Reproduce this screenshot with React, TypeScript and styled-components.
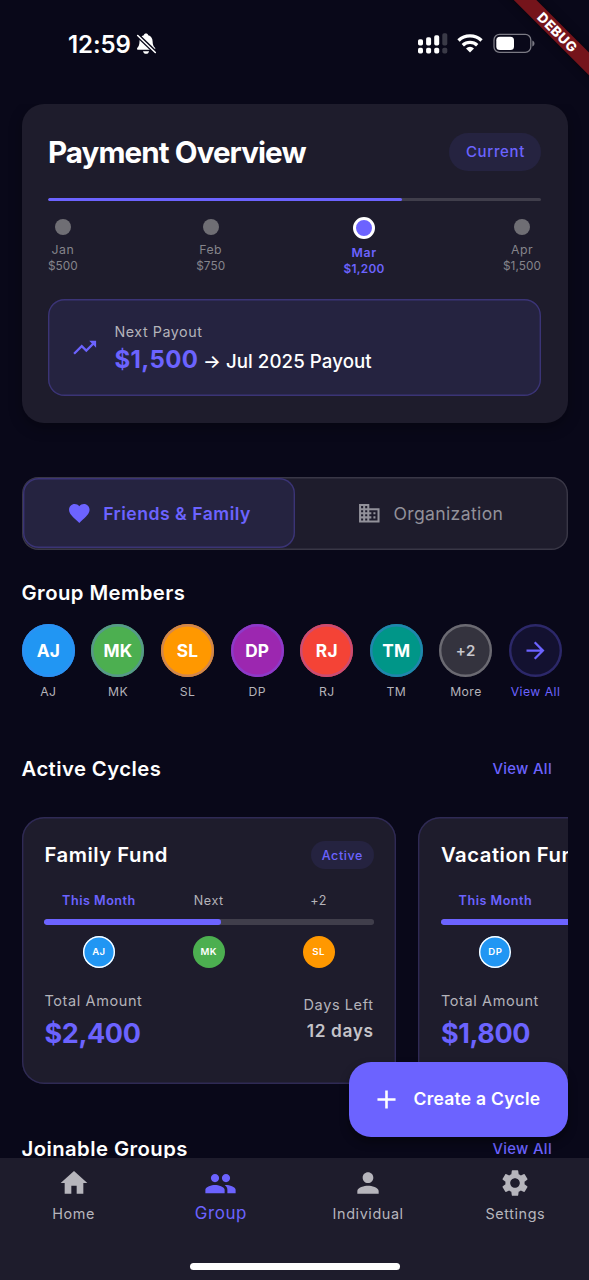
import React from "react";
import styled, { createGlobalStyle, css } from "styled-components";
import {
  MdAdd,
  MdArrowForward,
  MdBusiness,
  MdFavorite,
  MdHome,
  MdPeople,
  MdPerson,
  MdSettings,
  MdTrendingUp,
} from "react-icons/md";

const c = {
  bg: "#090819",
  surface: "#1e1c2c",
  accent: "#6c63ff",
  tint: "#252340",
  text: "#ffffff",
  soft: "#b4b3ba",
};

const GlobalStyle = createGlobalStyle`
  * { box-sizing: border-box; }
  body { margin: 0; background: ${c.bg}; font-family: Inter, "Liberation Sans", sans-serif; }
  svg { display: block; flex: none; }
`;

const type = (size: number, line: number, weight: number, spacing: number) => css`
  font-size: ${size}px;
  line-height: ${line}px;
  font-weight: ${weight};
  letter-spacing: ${spacing}px;
  white-space: nowrap;
`;

const Screen = styled.div`
  position: relative;
  width: 589px;
  height: 1280px;
  overflow: hidden;
  display: flex;
  flex-direction: column;
  background: ${c.bg};
  color: ${c.text};
`;

const StatusBar = styled.header`
  height: 104px;
  flex: none;
  display: flex;
  justify-content: space-between;
  align-items: flex-start;
  padding: 32px 54px 0 68px;
`;
const Clock = styled.div`
  display: flex;
  gap: 5px;
  padding-top: 1px;
  ${type(24, 24, 600, -0.1)}
`;

const Content = styled.main`
  flex: 1;
  min-height: 0;
  overflow: hidden;
  padding: 0 21.5px;
`;

const Overview = styled.section`
  height: 319px;
  padding: 28.5px 26.5px 0;
  border-radius: 22px;
  background: ${c.surface};
  box-shadow: 0 5px 14px rgba(0, 0, 0, 0.3);
`;
const OverviewHead = styled.div`
  display: flex;
  justify-content: space-between;
  align-items: center;
  height: 38px;
`;
const Title = styled.h1`
  margin: 0;
  ${type(29.6, 36, 700, -0.93)}
`;
const Badge = styled.span<{ $small?: boolean }>`
  display: flex;
  align-items: center;
  background: ${c.tint};
  color: ${c.accent};
  border-radius: 27px;
  ${(p) =>
    p.$small
      ? css`
          height: 28px;
          padding: 1px 10.5px 0 11px;
          ${type(12.5, 28, 500, 0.6)}
        `
      : css`
          height: 38px;
          padding: 0 16px 0 16.5px;
          ${type(15, 38, 500, 0.65)}
        `}
`;
const Track = styled.div<{ $h: number }>`
  height: ${(p) => p.$h}px;
  border-radius: ${(p) => p.$h / 2}px;
  background: #403e4b;
  overflow: hidden;
`;
const Fill = styled.div<{ $w: number }>`
  height: 100%;
  width: ${(p) => p.$w}px;
  border-radius: inherit;
  background: ${c.accent};
`;
const OverviewTrack = styled(Track)`
  margin-top: 27.5px;
`;
const Months = styled.div`
  display: flex;
  justify-content: space-between;
  align-items: center;
  height: 60px;
  margin-top: 15.5px;
`;
const Month = styled.div<{ $on?: boolean }>`
  display: flex;
  flex-direction: column;
  align-items: center;
  color: ${(p) => (p.$on ? c.accent : "#85848b")};
  ${(p) => type(12.3, 16, p.$on ? 600 : 400, p.$on ? 0.7 : 0.5)}
`;
const Sum = styled.span<{ $on?: boolean }>`
  ${(p) => type(11.8, 16, p.$on ? 600 : 400, p.$on ? 0.3 : 0.05)}
`;
const Dot = styled.i<{ $on?: boolean }>`
  width: ${(p) => (p.$on ? 22 : 16)}px;
  height: ${(p) => (p.$on ? 22 : 16)}px;
  margin-bottom: ${(p) => (p.$on ? 6 : 7)}px;
  border-radius: 50%;
  background: ${(p) => (p.$on ? c.accent : "#6f6e74")};
  border: ${(p) => (p.$on ? "3px solid #fff" : "0")};
`;
const Payout = styled.div`
  display: flex;
  align-items: center;
  gap: 16px;
  height: 97.5px;
  margin-top: 22px;
  padding: 0 23px;
  box-shadow: inset 0 0 0 1.4px #3b3476;
  border-radius: 16.5px;
  background: ${c.tint};
  color: ${c.accent};
`;
const PayoutText = styled.div`
  padding-top: 6px;
`;
const PayoutLabel = styled.div`
  color: ${c.soft};
  ${type(14.3, 20, 400, 0.55)}
`;
const PayoutLine = styled.div`
  display: flex;
  align-items: baseline;
  gap: 4.5px;
  margin-top: 2px;
`;
const PayoutAmount = styled.span`
  ${type(24, 32, 700, 0.4)}
`;
const PayoutNote = styled.span`
  color: ${c.text};
  ${type(18.7, 32, 500, 0.07)}
`;

const Switcher = styled.div`
  display: flex;
  height: 73px;
  margin-top: 53.5px;
  padding: 1.4px;
  box-shadow: inset 0 0 0 1.4px #393746;
  border-radius: 16.5px;
  background: ${c.surface};
`;
const SwitchTab = styled.button<{ $on?: boolean }>`
  flex: 1;
  display: flex;
  align-items: center;
  justify-content: center;
  gap: ${(p) => (p.$on ? 12 : 11.5)}px;
  padding: 1px 0 0;
  font-family: inherit;
  border: 0;
  background: ${(p) => (p.$on ? c.tint : "transparent")};
  box-shadow: ${(p) => (p.$on ? "inset 0 0 0 1.4px #3b3476" : "none")};
  border-radius: 15.5px;
  color: ${(p) => (p.$on ? c.accent : "#92919a")};
  ${(p) => type(17.6, 24, p.$on ? 600 : 400, p.$on ? 0.5 : 0.35)}
`;

const SectionTitle = styled.h2`
  margin: 0;
  ${type(20.3, 28, 600, 0.43)}
`;
const MembersTitle = styled(SectionTitle)`
  margin-top: 29px;
`;
const Members = styled.div`
  display: flex;
  gap: 16.6px;
  margin-top: 17px;
  padding-left: 0.4px;
`;
const Member = styled.div<{ $accent?: boolean }>`
  width: 53px;
  display: flex;
  flex-direction: column;
  align-items: center;
  gap: 6.5px;
  color: ${(p) => (p.$accent ? c.accent : c.soft)};
  ${type(12.2, 18, 400, 0.45)}
`;
const Avatar = styled.div<{ $bg: string; $ring: string; $more?: boolean }>`
  width: 53px;
  height: 53px;
  flex: none;
  display: flex;
  align-items: center;
  justify-content: center;
  padding-top: 1px;
  border-radius: 50%;
  box-shadow: inset 0 0 0 2.4px ${(p) => p.$ring};
  background: ${(p) => p.$bg};
  color: ${(p) => (p.$more ? "#c8c7cc" : "#fff")};
  ${(p) => type(p.$more ? 15 : 17.3, 22, p.$more ? 600 : 700, p.$more ? 0.6 : 0.2)}
`;

const SectionHead = styled.div`
  display: flex;
  justify-content: space-between;
  align-items: center;
  padding-right: 15.5px;
`;
const CyclesHead = styled(SectionHead)`
  margin-top: 53.5px;
`;
const JoinHead = styled(SectionHead)`
  margin-top: 51px;
`;
const Link = styled.a`
  color: ${c.accent};
  ${type(14.8, 28, 500, 0.35)}
`;
const Cycles = styled.div`
  display: flex;
  gap: 22px;
  margin: 34px 0 0;
  overflow: hidden;
`;
const Card = styled.article`
  width: 374.5px;
  height: 267.5px;
  flex: none;
  padding: 23px 22.5px 0;
  box-shadow: inset 0 0 0 1.4px #2f2a55;
  border-radius: 22px;
  background: ${c.surface};
`;
const CardHead = styled.div`
  display: flex;
  justify-content: space-between;
  align-items: center;
  height: 31px;
`;
const CardTitle = styled.h3`
  margin: 0;
  padding-left: 0.5px;
  ${type(20.3, 28, 600, 0.5)}
`;
const Thirds = styled.div`
  display: grid;
  grid-template-columns: repeat(3, 1fr);
  justify-items: center;
`;
const Stages = styled(Thirds)`
  margin: 21px 0 9.5px;
`;
const Stage = styled.span<{ $on?: boolean }>`
  color: ${(p) => (p.$on ? c.accent : c.soft)};
  ${(p) => type(12.6, 18, p.$on ? 600 : 400, 0.5)}
`;
const Faces = styled(Thirds)`
  margin-top: 11px;
`;
const Face = styled.div<{ $bg: string; $on?: boolean }>`
  width: 32px;
  height: 32px;
  display: flex;
  align-items: center;
  justify-content: center;
  border-radius: 50%;
  box-shadow: ${(p) => (p.$on ? "inset 0 0 0 1.4px #fff" : "none")};
  background: ${(p) => p.$bg};
  ${type(9.6, 12, 600, 0.5)}
`;
const CardFoot = styled.div`
  display: flex;
  justify-content: space-between;
  align-items: center;
  margin-top: 22px;
`;
const Stat = styled.div<{ $right?: boolean }>`
  text-align: ${(p) => (p.$right ? "right" : "left")};
  padding-left: 0.5px;
  padding-top: ${(p) => (p.$right ? 0 : 1)}px;
`;
const StatLabel = styled.div`
  color: ${c.soft};
  ${type(14.5, 20, 400, 0.6)}
`;
const Total = styled.div`
  margin-top: 4px;
  color: ${c.accent};
  ${type(27, 37, 700, -0.4)}
`;
const Days = styled.div`
  margin-top: 4px;
  padding-bottom: 3px;
  color: #c4c3c9;
  ${type(17.3, 24, 600, 0.6)}
`;

const CreateButton = styled.button`
  position: absolute;
  right: 21.5px;
  top: 1062px;
  width: 218.5px;
  height: 74.5px;
  display: flex;
  align-items: center;
  gap: 11.5px;
  padding: 0 0 0 22px;
  border: 0;
  border-radius: 22px;
  background: ${c.accent};
  color: #fff;
  font-family: inherit;
  box-shadow: 0 5px 10px rgba(0, 0, 0, 0.4);
  ${type(17.5, 24, 600, 0.25)}
`;

const Nav = styled.nav`
  position: relative;
  flex: none;
  height: 122px;
  display: grid;
  grid-template-columns: repeat(4, 1fr);
  background: ${c.surface};
`;
const NavItem = styled.div<{ $on?: boolean }>`
  display: flex;
  flex-direction: column;
  align-items: center;
  padding-top: 9px;
  gap: ${(p) => (p.$on ? 1 : 3)}px;
  color: ${(p) => (p.$on ? c.accent : "#b6b5bc")};
  ${(p) => (p.$on ? type(16.9, 24, 400, 0.65) : type(14.4, 23, 400, 0.6))}
`;
const HomeIndicator = styled.div`
  position: absolute;
  left: 190px;
  bottom: 10.5px;
  width: 210px;
  height: 7px;
  border-radius: 4px;
  background: #fff;
`;
const DebugBanner = styled.div`
  position: absolute;
  left: 487px;
  top: 23.6px;
  width: 140px;
  height: 16.4px;
  transform: rotate(45deg);
  background: #75141b;
  text-align: center;
  text-indent: 1px;
  box-shadow: 0 0 8px rgba(0, 0, 0, 0.5);
  ${type(13.6, 17, 800, 0.5)}
`;

const BellOff = () => (
  <svg width="21" height="22" viewBox="0 0 20 22" fill="#fff">
    <path d="M9.500 .5c1.200 0 2 .7 2.200 1.700 2.800.8 4.400 3.100 4.400 6 0 3.600 1.100 5 1.900 6 .5.7.8 1 .8 1.500 0 .7-.5 1.100-1.200 1.100H1.700c-.7 0-1.200-.4-1.200-1.100 0-.5.300-.8.8-1.500.8-1 1.700-2.500 1.700-6 0-2.900 1.600-5.200 4.300-6C7.500 1.200 8.300.5 9.500.5z" />
    <path d="M6.500 18.200h6.100c-.3 1.600-1.500 2.600-3 2.600s-2.800-1-3.100-2.600z" />
    <path d="M1 2.300l18 17.300" stroke={c.bg} strokeWidth="4.200" />
    <path d="M1.200 2.500l17.600 17" stroke="#fff" strokeWidth="1.600" strokeLinecap="round" />
  </svg>
);

const StatusIcons = () => (
  <svg width="118" height="24" viewBox="417 31.800 118 24" fill="#fff">
    {[0, 1, 2, 3].map((i) => (
      <g key={i} opacity={i === 3 ? 0.2 : 1}>
        <rect x={418 + i * 8.1} y={39 - i * 2} width="5" height={6.3 + i * 2} rx="1.700" />
        <rect x={418 + i * 8.1} y="47.600" width="5" height="5.700" rx="1.700" />
      </g>
    ))}
    <g fill="none" stroke="#fff" strokeWidth="3.400">
      <path d="M458.500 40.200a16.800 16.800 0 0 1 23 0" />
      <path d="M462.800 45a10.600 10.600 0 0 1 14.400 0" />
    </g>
    <path d="M470 52.300l-4-4.100a6 6 0 0 1 8 0z" />
    <rect x="494" y="34.200" width="36.800" height="18" rx="5.500" fill="none" stroke="#7b7a84" strokeWidth="1.300" />
    <rect x="496.300" y="36.500" width="17.700" height="13.400" rx="3.600" />
    <path d="M532.300 40.200c2.900.9 2.900 5.100 0 6z" fill="#7b7a84" />
  </svg>
);

const months = [
  ["Jan", "$500"],
  ["Feb", "$750"],
  ["Mar", "$1,200"],
  ["Apr", "$1,500"],
];
const members = [
  ["AJ", "#2196f3", "#2b91f3"],
  ["MK", "#4caf50", "#56988a"],
  ["SL", "#ff9800", "#d0864f"],
  ["DP", "#9c27b0", "#8c3ac9"],
  ["RJ", "#f44336", "#ca4c73"],
  ["TM", "#009688", "#2185ae"],
];
const cycles = [
  { name: "Family Fund", total: "$2,400", days: "12 days", faces: ["AJ", "MK", "SL"], fill: 176.5 },
  { name: "Vacation Fund", total: "$1,800", days: "18 days", faces: ["DP", "RJ", "TM"], fill: 176.5 },
];
const faceColors = ["#2196f3", "#4caf50", "#ff9800"];

export default function App() {
  return (
    <Screen>
      <GlobalStyle />
      <StatusBar>
        <Clock>
          12:59
          <BellOff />
        </Clock>
        <StatusIcons />
      </StatusBar>
      <Content>
        <Overview>
          <OverviewHead>
            <Title>Payment Overview</Title>
            <Badge>Current</Badge>
          </OverviewHead>
          <OverviewTrack $h={3}>
            <Fill $w={353.5} />
          </OverviewTrack>
          <Months>
            {months.map(([name, sum]) => (
              <Month key={name} $on={name === "Mar"}>
                <Dot $on={name === "Mar"} />
                <span>{name}</span>
                <Sum $on={name === "Mar"}>{sum}</Sum>
              </Month>
            ))}
          </Months>
          <Payout>
            <MdTrendingUp size={27.4} />
            <PayoutText>
              <PayoutLabel>Next Payout</PayoutLabel>
              <PayoutLine>
                <PayoutAmount>$1,500</PayoutAmount>
                <PayoutNote>→ Jul 2025 Payout</PayoutNote>
              </PayoutLine>
            </PayoutText>
          </Payout>
        </Overview>

        <Switcher>
          <SwitchTab $on>
            <MdFavorite size={24.6} />
            Friends &amp; Family
          </SwitchTab>
          <SwitchTab>
            <MdBusiness size={24.6} />
            Organization
          </SwitchTab>
        </Switcher>

        <MembersTitle>Group Members</MembersTitle>
        <Members>
          {members.map(([id, bg, ring]) => (
            <Member key={id}>
              <Avatar $bg={bg} $ring={ring}>{id}</Avatar>
              {id}
            </Member>
          ))}
          <Member>
            <Avatar $bg="#34333e" $ring="#6b6a72" $more>+2</Avatar>
            More
          </Member>
          <Member $accent>
            <Avatar $bg="#131130" $ring="#2c2869">
              <MdArrowForward size={27} color={c.accent} />
            </Avatar>
            View All
          </Member>
        </Members>

        <CyclesHead>
          <SectionTitle>Active Cycles</SectionTitle>
          <Link>View All</Link>
        </CyclesHead>
        <Cycles>
          {cycles.map((cycle) => (
            <Card key={cycle.name}>
              <CardHead>
                <CardTitle>{cycle.name}</CardTitle>
                <Badge $small>Active</Badge>
              </CardHead>
              <Stages>
                <Stage $on>This Month</Stage>
                <Stage>Next</Stage>
                <Stage>+2</Stage>
              </Stages>
              <Track $h={5.5}>
                <Fill $w={cycle.fill} />
              </Track>
              <Faces>
                {cycle.faces.map((face, i) => (
                  <Face key={face} $bg={faceColors[i]} $on={i === 0}>{face}</Face>
                ))}
              </Faces>
              <CardFoot>
                <Stat>
                  <StatLabel>Total Amount</StatLabel>
                  <Total>{cycle.total}</Total>
                </Stat>
                <Stat $right>
                  <StatLabel>Days Left</StatLabel>
                  <Days>{cycle.days}</Days>
                </Stat>
              </CardFoot>
            </Card>
          ))}
        </Cycles>
        <JoinHead>
          <SectionTitle>Joinable Groups</SectionTitle>
          <Link>View All</Link>
        </JoinHead>
      </Content>

      <CreateButton>
        <MdAdd size={31} />
        Create a Cycle
      </CreateButton>

      <Nav>
        <NavItem><MdHome size={32} />Home</NavItem>
        <NavItem $on><MdPeople size={33} />Group</NavItem>
        <NavItem><MdPerson size={32} />Individual</NavItem>
        <NavItem><MdSettings size={32} />Settings</NavItem>
        <HomeIndicator />
      </Nav>
      <DebugBanner>DEBUG</DebugBanner>
    </Screen>
  );
}
